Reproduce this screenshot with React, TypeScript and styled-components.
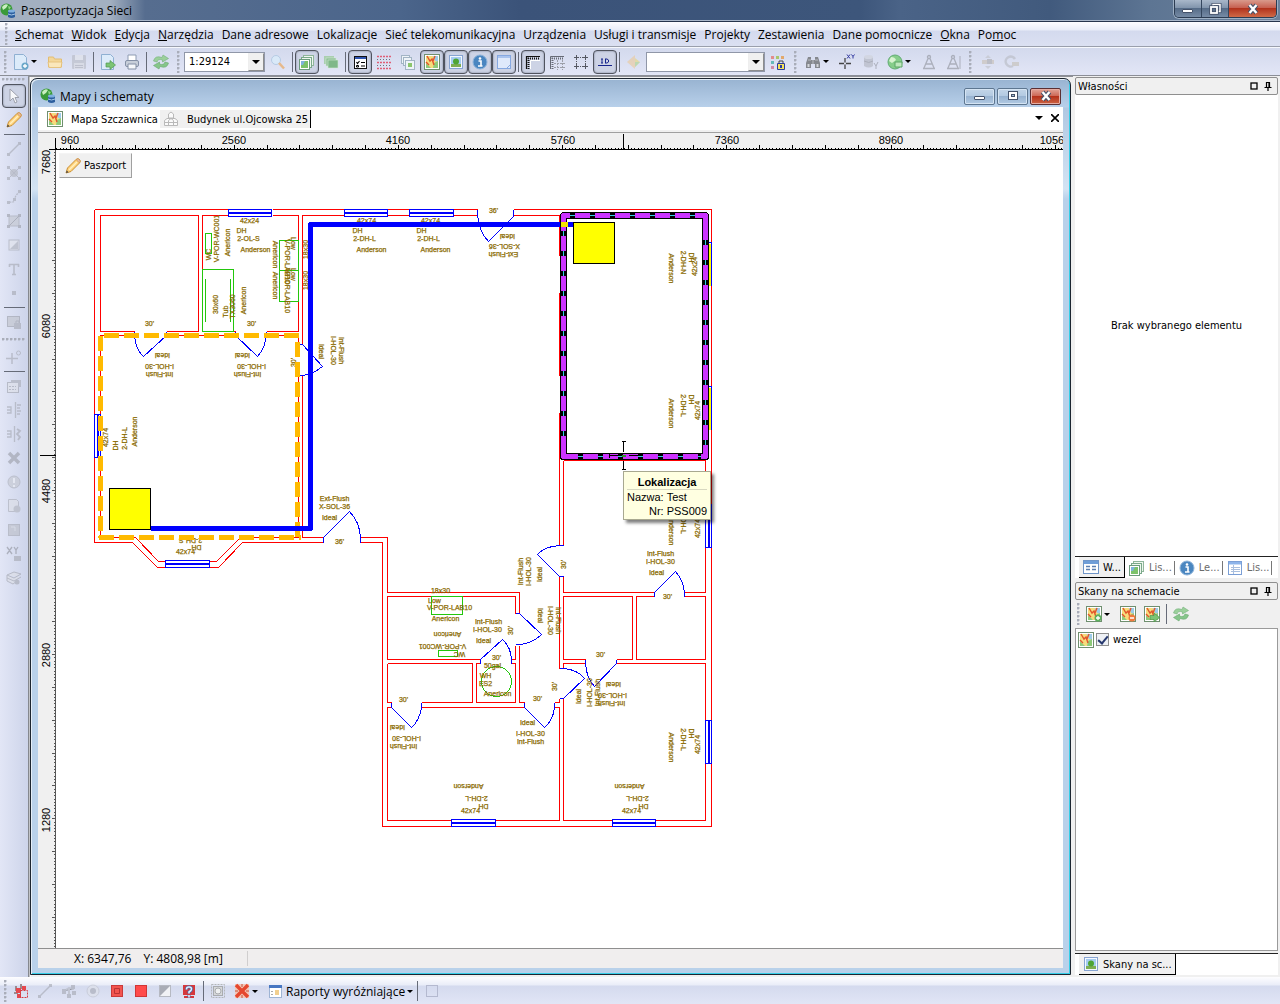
import React from "react";
import styled, { createGlobalStyle, css } from "styled-components";

const UI = `"Open Sans", "Noto Sans", sans-serif`;
const SMALL = `"DejaVu Sans Condensed", "DejaVu Sans", sans-serif`;
const ARIAL = `"Liberation Sans", Arial, sans-serif`;

const Global = createGlobalStyle`
  * { box-sizing: border-box; }
  body { margin: 0; background: #f0f0f0; color: #000; font: 12px ${UI}; }
  button, select, input { font: inherit; color: inherit; margin: 0; padding: 0; }
  button { background: none; border: 0; }
`;

/* ---------- icons ---------- */

const Glyph = styled.svg<{ $dim?: boolean }>`
  display: block;
  flex: none;
  width: 16px;
  height: 16px;
  opacity: ${(p) => (p.$dim ? 0.6 : 1)};
`;

const globe = (
  <>
    <circle cx="6.500" cy="6.500" r="6" fill="#3a9a3a" />
    <path d="M2 4 Q5 0 8 2 L6 5 L3 7Z" fill="#c9efc0" />
    <path d="M8 3 L11 4 L9 7Z" fill="#8fd486" />
    <path d="M8 8v6q3.500 2 7 0V8z" fill="#2d5f9e" />
    <ellipse cx="11.500" cy="8" rx="3.500" ry="1.500" fill="#7fb0df" />
    <path d="M8 11q3.500 2 7 0" fill="none" stroke="#a9cbea" />
  </>
);
const page = (
  <path d="M1.500 0.500h9l3 3v12h-12z" fill="#dcebfa" stroke="#8fb0d2" />
);
const map = (
  <>
    <rect x="0.500" y="0.500" width="15" height="15" fill="#fff" stroke="#6f8f6f" />
    <rect x="2" y="2" width="12" height="12" fill="#f6dc7c" />
    <path d="M9 2h5v6l-3-1z" fill="#9ccbe8" />
    <path d="M2 9l5 5H2zM10 9l4-2v7h-5z" fill="#8fca7a" />
    <path d="M3 2l3 5 2-2 2 6M9 7l2-5M2 8l3 3" fill="none" stroke="#e2552b" strokeWidth="1.400" />
  </>
);
const layers = (
  <>
    <rect x="4.500" y="1.500" width="10" height="10" fill="#eef7ee" stroke="#8fb59a" />
    <rect x="2.500" y="3.500" width="10" height="10" fill="#eef7ee" stroke="#7aa98a" />
    <rect x="0.500" y="5.500" width="10" height="10" fill="#fff" stroke="#6d9b7d" />
    <path d="M2 7h7v7H2z" fill="#7cc26a" />
    <path d="M2 7h4l-2 4H2z" fill="#7fb4dc" />
  </>
);
const picture = (
  <>
    <rect x="1.500" y="1.500" width="13" height="13" fill="#f4f8ff" stroke="#87a4d2" />
    <rect x="3" y="3" width="10" height="10" fill="#a6cdf0" />
    <path d="M3 10h10v3H3z" fill="#7fae52" />
    <circle cx="8" cy="7.500" r="3" fill="#4fa535" />
  </>
);
const info = (
  <>
    <circle cx="8" cy="8" r="7" fill="#4a86c0" stroke="#8fb4da" />
    <circle cx="8" cy="4.500" r="1.300" fill="#fff" />
    <path d="M6.500 7h2.500v5M6 12h4.500" fill="none" stroke="#fff" strokeWidth="1.600" />
  </>
);
const form = (
  <>
    <rect x="0.500" y="1.500" width="15" height="13" fill="#fff" stroke="#6f95c8" />
    <path d="M1 2h14v3H1z" fill="#6f9ed8" />
    <path d="M3 7.500h4M3 10.500h4M9 7.500h4M9 10.500h4" stroke="#5d7fb0" strokeWidth="1.500" />
  </>
);
const sheet = (
  <>
    <rect x="1.500" y="1.500" width="13" height="13" fill="#fff" stroke="#7b9fd6" />
    <path d="M2 2h12v2.500H2z" fill="#8db4ea" />
    <path d="M4 7.500h9M4 9.500h9M4 11.500h9M6.500 5v9" stroke="#a9bfdf" />
  </>
);
const pencil = (
  <>
    <path d="M1 15l1.500-5L11 1.500q2-1.500 3.500 0t0 3.500L6 13.500z" fill="#ffd27a" stroke="#c98f35" />
    <path d="M4 12L12 4" stroke="#fff0c2" strokeWidth="1.500" />
    <path d="M11 1.500q2-1.500 3.500 0t0 3.500z" fill="#e9b9a4" stroke="#c98f35" strokeWidth="0.600" />
    <path d="M1 15l0.800-2.500 1.700 1.700z" fill="#444" />
  </>
);
const refresh = (
  <>
    <path d="M0.500 7Q2 1 9 3.500L10 1l5.500 3.500L9.500 8l0-2Q5 4.500 4 8z" fill="#9bd09b" stroke="#74b07a" strokeWidth="0.600" />
    <path d="M15.500 9Q14 15 7 12.500L6 15 0.500 11.500 6.500 8l0 2Q11 11.500 12 8z" fill="#86c68a" stroke="#6aa870" strokeWidth="0.600" />
  </>
);
const compass = (
  <path d="M8 1.500a1.500 1.500 0 1 1 0 3 1.500 1.500 0 1 1 0-3M7 4.500L3 14M9 4.500L13 14M5 10h6M2 14.500h12" fill="none" stroke="#8d9099" strokeWidth="1.300" />
);

const icons: Record<string, React.ReactNode> = {
  globe, map, layers, picture, info, form, sheet, pencil, refresh, compass,
  newDoc: <>{page}<circle cx="12" cy="12" r="3.500" fill="#6aa7c9" /><path d="M12 10v4M10 12h4" stroke="#fff" strokeWidth="1.300" /></>,
  folder: <><path d="M1.500 3h5l1 2h7v8h-13z" fill="#f3d79a" stroke="#e2bd73" /><path d="M1 8h14l-1 5.500H2z" fill="#fae7bb" stroke="#e2bd73" strokeWidth="0.800" /></>,
  save: <><rect x="1" y="1" width="14" height="14" rx="1" fill="#b7bac4" /><path d="M4 1h8v5H4z" fill="#e3e5ea" /><path d="M3 9h10v6H3z" fill="#d6d8de" /><path d="M4 11.500h8M4 13.500h8" stroke="#a8abb5" /></>,
  export: <>{page}<path d="M6 9h4V6.500L15.500 11 10 15.500V13H6z" fill="#7cc474" stroke="#519a50" strokeWidth="0.700" /></>,
  print: <><path d="M4 1h8v6H4z" fill="#fff" stroke="#8d9bb2" /><rect x="1.500" y="6.500" width="13" height="6" rx="1.500" fill="#c7ced9" stroke="#8490a6" /><path d="M4 10h8v5H4z" fill="#f5f7fa" stroke="#8490a6" /></>,
  lens: <><circle cx="6" cy="6" r="4.500" fill="#d9e9f8" stroke="#b6cbe4" /><path d="M9 9l5 5.500" stroke="#e6b98c" strokeWidth="2.500" /></>,
  stack: <><rect x="1" y="2" width="10" height="8" fill="#a9cfaf" /><rect x="3" y="4" width="10" height="8" fill="#8dbf95" stroke="#d4ead6" strokeWidth="0.600" /><rect x="5" y="6" width="10" height="8" fill="#7fb888" stroke="#d4ead6" strokeWidth="0.600" /></>,
  checklist: <><rect x="2.500" y="2.500" width="12" height="12" fill="#fff" stroke="#111" /><path d="M3 3h11v2H3z" fill="#2f55b0" /><path d="M9 8.500h4M9 12h4M4.500 8l1 1.500L7.500 7" fill="none" stroke="#000" strokeWidth="1.100" /><path d="M4.500 11.500h2v1.500h-2z" fill="none" stroke="#000" /></>,
  dots: <><path d="M1 2.500h14M1 8.500h14M1 14.500h14" stroke="#e05f77" strokeWidth="1.300" strokeDasharray="2 1" /><path d="M1 5.500h14M1 11.500h14" stroke="#70727e" strokeDasharray="1 2" /></>,
  copies: <><rect x="1.500" y="1.500" width="8" height="8" fill="#eef4f8" stroke="#a2b4c4" /><rect x="3.500" y="3.500" width="8" height="8" fill="#eef4f8" stroke="#a2b4c4" /><rect x="5.500" y="6.500" width="9" height="9" fill="#eef4f8" stroke="#a2b4c4" /><path d="M8 9h4v4H8z" fill="#8cc66c" /></>,
  note: <><rect x="1.500" y="1.500" width="13" height="13" fill="#dfe9fb" stroke="#86a8e0" /><path d="M2 3h12" stroke="#a9c3ee" strokeWidth="2" /><path d="M11 14l3-3" stroke="#86a8e0" /></>,
  corner: <><path d="M1.500 15V2.500H15" fill="none" stroke="#111" strokeWidth="1.200" /><path d="M5.500 15V6.500H15" fill="none" stroke="#fff" /><path d="M3.500 15V4.500H15" fill="none" stroke="#111" strokeWidth="2" strokeDasharray="1 1" /></>,
  grid: <><path d="M1.500 15V2.500H15" fill="none" stroke="#666a75" /><path d="M3.500 15V4.500H15" fill="none" stroke="#666a75" strokeWidth="2" strokeDasharray="1 1" /><path d="M8.500 6v10M5 9.500h11M13.500 6v10M5 13.500h11" stroke="#9c9fa8" strokeDasharray="2 1" /></>,
  snaps: <><path d="M3.500 1v5M1 3.500h5M12.500 1v5M10 3.500h5M3.500 10v5M1 12.500h5M12.500 10v5M10 12.500h5" stroke="#555862" /><path d="M7 3.500h3M3.500 7v3M12.500 7v3M7 12.500h3" stroke="#555862" strokeDasharray="1 1" /></>,
  id: <><path d="M4 5h2M5 5v4M4 9h2M8.500 5v4M8 5h2l1.500 1v2L10 9H8" fill="none" stroke="#16248c" strokeWidth="1" /><path d="M1 11.500h14" stroke="#16248c" /></>,
  diamond: <><path d="M1 8l8-7v14z" fill="#ecc998" /><path d="M9 4l5 4-5 5z" fill="#e7d778" /><path d="M9 8l5 0-5 5z" fill="#a8d28a" /></>,
  palette: <><path d="M1 2h3v3H1z" fill="#e28c8c" /><path d="M6 2h3v3H6z" fill="#a9c76b" /><path d="M11 2h3v3h-3z" fill="#e2a86c" /><path d="M1 7h3v3H1z" fill="#65b9b9" /><path d="M1 12h3v3H1z" fill="#cf8ca8" /><path d="M7.500 9.500h7v6h-7z" fill="#f5e25a" stroke="#2b3c9e" /><path d="M10 11h2v3h-2z" fill="#2b3c9e" /><path d="M9 9V7h4v2" fill="none" stroke="#444" /></>,
  binoculars: <><path d="M3 3h3v3h4V3h3l2 6v5h-5v-4H6v4H1V9z" fill="#85888e" /><path d="M2.500 10h2v3h-2zM11.500 10h2v3h-2z" fill="#d4d6da" /><path d="M8 6v4M3 6h3M10 6h3" stroke="#b9bcc2" /></>,
  crossXY: <><path d="M6 4v11M0 9.500h12" stroke="#444" strokeWidth="1.300" /><path d="M5 8.500h2v2H5z" fill="#dde1f2" /><path d="M8 0.500l3 4M11 0.500l-3 4M12.500 0.500l1.500 2 1.500-2M14 2.500v2" fill="none" stroke="#3238a0" /></>,
  database: <><path d="M1 3v9q5 3 9 0V3z" fill="#b0b3bd" /><ellipse cx="5.500" cy="3" rx="4.500" ry="2" fill="#cfd2da" /><path d="M1 7q5 3 9 0M11 9l2 3 2-4M13 12v3" fill="none" stroke="#8c8f98" /></>,
  globe2: <><circle cx="8" cy="8" r="7" fill="#86cd8a" stroke="#62ac74" /><path d="M4 3q4 0 5 3l-4 3-3-2z" fill="#d8f3d0" /><path d="M8 8h7v5H8z" fill="#bfe8bd" stroke="#5aa564" /></>,
  compass2: <>{compass}<path d="M15 2v13" stroke="#8d9099" /></>,
  move: <><path d="M8 1l3 3H5zM8 15l3-3H5z" fill="#c0c2c8" /><rect x="2" y="6" width="12" height="4" fill="#c8bfb4" /><path d="M7 5h5v5H7z" fill="#a9a9ac" /></>,
  rotate: <><path d="M9 12a5 5 0 1 1 2-7" fill="none" stroke="#b7bac2" strokeWidth="2.500" /><path d="M8 8h7v4H8z" fill="#c4bfb5" /></>,
  cursor: <><path d="M4 1v12l3-3 2 5 2-1-2-4.500h4z" fill="#f6f7fa" stroke="#9da1ad" /></>,
  line: <><path d="M3 13L13 3" stroke="#a4a7b1" strokeWidth="1.500" /><path d="M1 12h3v3H1zM12 1h3v3h-3z" fill="#a4a7b1" /></>,
  nodeCircle: <><circle cx="8" cy="8" r="4" fill="#b2b5bd" /><path d="M1 1h3v3H1zM12 1h3v3h-3zM1 12h3v3H1zM12 12h3v3h-3z" fill="#a4a7b1" /><path d="M3 3l10 10M13 3L3 13" stroke="#a4a7b1" /></>,
  curve: <><path d="M3 13q6 1 6-3 0-4 5-7" fill="none" stroke="#a4a7b1" strokeWidth="1.300" strokeDasharray="2 1" /><path d="M1 12h3v3H1zM12 1h3v3h-3zM7 9h3v3H7z" fill="#a4a7b1" /></>,
  polygon: <><path d="M3 3l10 0v10L3 13z" fill="#c3c6ce" stroke="#a4a7b1" /><path d="M1 1h3v3H1zM12 1h3v3h-3zM1 12h3v3H1zM12 12h3v3h-3z" fill="#9a9da7" /><path d="M3 13L13 3" stroke="#8f929c" /></>,
  half: <><rect x="3" y="3" width="10" height="10" fill="#e4e6ec" stroke="#a4a7b1" /><path d="M4 12L12 4v8z" fill="#b0b3bb" /></>,
  text: <path d="M3 3.500h10M8 3v10M6 13.500h4M3.500 3v3M12.500 3v3" fill="none" stroke="#a4a7b1" strokeWidth="1.600" />,
  point: <rect x="6" y="6" width="4" height="4" fill="#a4a7b1" />,
  saveLock: <><rect x="1.500" y="2.500" width="12" height="10" fill="#bfc2ca" stroke="#9a9da7" /><path d="M8 9h7v6H8z" fill="#a4a7b1" /><path d="M10 9V7h3v2" fill="none" stroke="#9a9da7" /></>,
  crossDot: <><path d="M6 4v11M0 9.500h12" stroke="#a4a7b1" strokeWidth="1.500" /><circle cx="12.500" cy="4" r="2" fill="none" stroke="#a4a7b1" /></>,
  props: <><rect x="1.500" y="4.500" width="11" height="10" fill="#dfe1e8" stroke="#a0a3ad" /><path d="M5 2h10v7h-3V5H5z" fill="#a8abb5" /><path d="M3 8.500h7M3 11.500h7" stroke="#a0a3ad" strokeDasharray="2 1" /></>,
  sideA: <><path d="M1 5h4v6H1M1 8h4M9.500 0v16" fill="none" stroke="#a4a7b1" strokeWidth="1.300" /><path d="M11 3h4M11 6h3M11 9h4M11 12h3" stroke="#a4a7b1" strokeWidth="1.500" /></>,
  sideB: <><path d="M1 5h4v6H1M1 8h4M8.500 0v16" fill="none" stroke="#a4a7b1" strokeWidth="1.300" /><path d="M11 3l3 2-3 3 3 3-2 3" fill="none" stroke="#a4a7b1" strokeWidth="1.800" /></>,
  cross: <path d="M3 3l10 10M13 3L3 13" stroke="#9a9da7" strokeWidth="3.500" />,
  ball: <><circle cx="8" cy="8" r="6" fill="#c4c7cf" stroke="#a9acb6" /><path d="M8 4v5M8 11v2" stroke="#eceef3" strokeWidth="2" /></>,
  pageDot: <><path d="M2.500 1.500h8l2 2v10h-10z" fill="#dcdee5" stroke="#a9acb6" /><circle cx="11" cy="11" r="3.500" fill="#b0b3bb" /></>,
  square: <><rect x="2.500" y="2.500" width="11" height="11" fill="#b9bcc5" stroke="#a4a7b1" /><path d="M5 5h4v4" fill="none" stroke="#d7d9e0" /></>,
  xyLock: <><path d="M1 1l5 7M6 1L1 8M8 1l2 3 2-3M10 4v4" fill="none" stroke="#8f929c" strokeWidth="1.300" /><rect x="8" y="10" width="7" height="5" fill="#a4a7b1" /></>,
  book: <><path d="M1 5l7-3 7 2-7 4zM1 5v3l7 3 7-4M1 8v3l6 3 4-3" fill="#dcdee5" stroke="#a0a3ad" /><circle cx="11" cy="12" r="2.500" fill="#a4a7b1" /></>,
  redNodes: <><path d="M3 3v5M8 1v5M1 10h4" stroke="#9a8b90" strokeWidth="2" /><path d="M3 5h5v5H3zM9 3h4v4H9zM4 11h4v4H4z" fill="#e5484e" /><path d="M7.500 7.500h7v7h-7z" fill="none" stroke="#d43b43" strokeDasharray="2 1" /></>,
  greyNodes: <><path d="M3 8l5-3 5 1M8 5v8" stroke="#b3b6bf" strokeWidth="2" /><path d="M1 6h4v5H1zM10 2h4v4h-4zM6 11h4v4H6zM11 8h4v4h-4z" fill="#a4a7b1" /></>,
  radio: <><circle cx="8" cy="8" r="6" fill="#dfe2ea" stroke="#bfc2cc" /><circle cx="8" cy="8" r="3" fill="#a4a7b1" /></>,
  redSquare: <><rect x="2.500" y="2.500" width="11" height="11" fill="#f2544f" stroke="#c93a3a" /><path d="M5.500 5.500h5v5h-5z" fill="none" stroke="#b93434" /></>,
  redSolid: <rect x="2.500" y="2.500" width="11" height="11" fill="#ff4b4b" stroke="#cf3636" />,
  halfTri: <><rect x="2.500" y="2.500" width="11" height="11" fill="#f1f2f6" stroke="#b6b9c2" /><path d="M3 13V3h10z" fill="#a9acb6" /></>,
  help: <><path d="M2 2h12v10H2zM3 13h10v2H3z" fill="#d5383c" /><path d="M5.500 6.500q0-3 3-2.500t1.500 3.500l-2 1.500v1.500M8 12v2.500" fill="none" stroke="#3f6fb5" strokeWidth="3" /><path d="M5.500 6.500q0-3 3-2.500t1.500 3.500l-2 1.500v1.500M8 12v2.500" fill="none" stroke="#e6effc" strokeWidth="1.600" /></>,
  ring: <><rect x="1.500" y="1.500" width="13" height="13" fill="none" stroke="#b3b6b8" strokeDasharray="2 1" /><rect x="3.500" y="3.500" width="9" height="9" fill="#d6d8da" stroke="#a9acaf" /><circle cx="8" cy="8" r="3" fill="#eef0f0" stroke="#a9acaf" /></>,
  redX: <><path d="M1 1h14v14H1z" fill="#f3c7b7" /><path d="M2 2l12 12M14 2L2 14" stroke="#e5482f" strokeWidth="3.500" /><path d="M8 1v3M8 12v3M1 8h3M12 8h3" stroke="#c4533d" /></>,
  report: <><rect x="1.500" y="2.500" width="12" height="12" fill="#fff" stroke="#9eb4d4" /><path d="M1 2h13v3H1z" fill="#4777c2" /><path d="M7 7h4v5H7z" fill="#f1cf8f" /><path d="M3 8.500h2M3 11.500h2" stroke="#aaa" /></>,
  blank: <rect x="2.500" y="2.500" width="11" height="11" fill="none" stroke="#b4b9cf" />,
  houses: <><path d="M5.500 7V3L8 1l2.500 2v4zM1.500 14.500v-5L4 7.500h8l2.500 2v5zM5.500 14.500v-5M10.500 14.500v-5M5.500 9.500L8 7.500l2.500 2M1.500 11.500h13" fill="#fafafa" stroke="#b9b9b9" /></>,
  mapAdd: <>{map}<circle cx="12" cy="12" r="3.500" fill="#5db05d" /><path d="M12 10v4M10 12h4" stroke="#fff" strokeWidth="1.300" /></>,
  mapDel: <>{map}<circle cx="12" cy="12" r="3.500" fill="#ef7a3d" /><path d="M10 12h4" stroke="#fff" strokeWidth="1.500" /></>,
  mapGo: <>{map}<path d="M6 9.500h4V7l5.500 4.500L10 16v-2.500H6z" fill="#7cc474" stroke="#4f964c" strokeWidth="0.700" /></>,
};

const Icon = ({ name, dim }: { name: string; dim?: boolean }) => (
  <Glyph viewBox="0 0 16 16" $dim={dim} aria-hidden="true">{icons[name]}</Glyph>
);

/* ---------- shared parts ---------- */

const Shell = styled.div`
  display: flex;
  flex-direction: column;
  min-height: 100vh;
`;

const Caret = styled.span`
  flex: none;
  width: 0;
  height: 0;
  border: 3px solid transparent;
  border-top-color: #000;
  border-bottom: 0;
`;

const ToolButton = styled.button<{ $on?: boolean; $split?: boolean }>`
  display: flex;
  flex: none;
  align-items: center;
  gap: 2px;
  width: ${(p) => (p.$split ? 34 : 24)}px;
  height: 24px;
  padding: 0 4px;
  ${(p) =>
    p.$on &&
    css`
      padding: 0 3px;
      border: 1px solid #50545f;
      border-radius: 4px;
      background: #cdd3e5;
      box-shadow: inset 0 0 2px #6d7385;
    `}
`;

const Sep = styled.span<{ $flat?: boolean }>`
  flex: none;
  ${(p) =>
    p.$flat
      ? "width: 21px; height: 1px; margin: 2px 0;"
      : "width: 1px; height: 20px; margin: 0 2px;"}
  background: #666b78;
`;

const Grip = styled.span<{ $flat?: boolean; $size?: number }>`
  flex: none;
  ${(p) =>
    p.$flat
      ? `width: 24px; height: ${p.$size ?? 11}px; background: radial-gradient(circle at 1px 1px, #a9adb9 1px, transparent 2px) 0 50% / 4px 4px repeat-x;`
      : `height: 22px; width: ${p.$size ?? 11}px; background: radial-gradient(circle at 1px 1px, #a9adb9 1px, transparent 2px) 60% 0 / 4px 4px repeat-y;`}
`;

type Tool = string | { i: string; n: string; on?: boolean; split?: boolean; dim?: boolean };

const Tools = ({ items, flat }: { items: Tool[]; flat?: boolean }) => (
  <>
    {items.map((t, k) =>
      t === "|" ? <Sep key={k} $flat={flat} /> :
      t === ":" ? <Grip key={k} $flat={flat} /> :
      typeof t === "string" ? null : (
        <ToolButton key={k} type="button" aria-label={t.n} $on={t.on} $split={t.split}>
          <Icon name={t.i} dim={t.dim} />
          {t.split && <Caret />}
        </ToolButton>
      )
    )}
  </>
);

/* ---------- top bars ---------- */

const TitleBar = styled.header`
  display: flex;
  align-items: flex-start;
  height: 22px;
  border-bottom: 1px solid #26354c;
  box-shadow: inset 0 -1px #a9b7c9;
  background: linear-gradient(90deg, #a3b0c1 0, #a3b0c1 110px, #566d8f 145px, #4b658b 400px, #3b5379 520px, #3d567b 860px, #4a6387 900px, #415a7d 1050px, #5d7593 1150px, #6c829c);
`;

const AppTitle = styled.h1`
  display: flex;
  align-items: center;
  gap: 5px;
  flex: 1;
  height: 21px;
  margin: 0;
  font: 12px ${UI};
`;

const WinButtons = styled.div`
  display: flex;
  margin-right: 3px;
  border: 1px solid #2c3c52;
  border-top: 0;
  border-radius: 0 0 5px 5px;
  overflow: hidden;
  box-shadow: 0 0 0 1px #9eb0c4;
`;

const WinButton = styled.button<{ $close?: boolean }>`
  display: grid;
  place-items: center;
  width: ${(p) => (p.$close ? 47 : 27)}px;
  height: 17px;
  border-right: ${(p) => (p.$close ? "0" : "1px solid #34465e")};
  background: ${(p) =>
    p.$close
      ? "linear-gradient(#d99a8c, #c76151 45%, #b2331d 50%, #cf6a47)"
      : "linear-gradient(#a9b8ca, #8295ad 45%, #566c88 50%, #768ba5)"};
`;

const WinGlyph = ({ kind }: { kind: "min" | "max" | "restore" | "close" }) => (
  <svg width="14" height="12" viewBox="0 0 14 12" aria-hidden="true">
    {kind === "min" && <rect x="1.500" y="6.500" width="10" height="3" rx="0.500" fill="#fff" stroke="#44526a" />}
    {kind === "max" && (
      <>
        <rect x="2.500" y="1.500" width="9" height="8" fill="#fff" stroke="#44526a" />
        <rect x="5.500" y="4.500" width="3" height="2" fill="#a9bfd6" stroke="#44526a" />
      </>
    )}
    {kind === "restore" && (
      <g fill="none">
        <path d="M5 3V1.500h7V8.500h-2" stroke="#44526a" strokeWidth="3" />
        <path d="M5 3V1.500h7V8.500h-2" stroke="#fff" strokeWidth="1.500" />
        <rect x="3" y="4" width="6" height="6" stroke="#44526a" strokeWidth="3.500" />
        <rect x="3" y="4" width="6" height="6" stroke="#fff" strokeWidth="1.800" />
      </g>
    )}
    {kind === "close" && (
      <g fill="none">
        <path d="M3.500 2l7 8M10.500 2l-7 8" stroke="#44526a" strokeWidth="4.500" />
        <path d="M3.500 2l7 8M10.500 2l-7 8" stroke="#fff" strokeWidth="2.400" />
      </g>
    )}
  </svg>
);

const MenuBar = styled.nav`
  display: flex;
  align-items: center;
  height: 25px;
  padding-left: 3px;
  border-bottom: 1px solid #9a9fac;
  background: linear-gradient(#fdfdff 0, #e9edf8 8px, #d4daee 9px, #dbe0f2);
`;

const MenuItem = styled.button`
  padding: 0 4px;
  white-space: nowrap;
`;

const ToolBar = styled.div`
  display: flex;
  align-items: center;
  height: 29px;
  padding-left: 3px;
  border-top: 1px solid #f6f8fd;
  border-bottom: 1px solid #8b8e97;
  background: linear-gradient(#d3d9ed, #e2e6f6);
`;

const Combo = styled.label<{ $w: number }>`
  display: grid;
  flex: none;
  width: ${(p) => p.$w}px;
  padding-right: 1px;
`;

const ComboBox = styled.select`
  grid-area: 1 / 1;
  appearance: none;
  width: 100%;
  height: 20px;
  padding: 0 20px 0 4px;
  border: 1px solid #9097a8;
  border-radius: 0;
  background: #fff;
  font: 11px ${SMALL};
`;

const ComboArrow = styled.span`
  grid-area: 1 / 1;
  display: grid;
  place-items: center;
  justify-self: end;
  align-self: center;
  width: 16px;
  height: 18px;
  margin-right: 1px;
  border: 1px solid #8d8d8d;
  border-top-color: #eee;
  border-left-color: #eee;
  background: #f0f0f0;
  pointer-events: none;
  span { border-width: 4px 4px 0; }
`;

/* ---------- body ---------- */

const Body = styled.div`
  display: flex;
  flex: 1;
`;

const SideBar = styled.div`
  display: flex;
  flex: none;
  flex-direction: column;
  align-items: center;
  width: 28px;
  background: linear-gradient(90deg, #e2e6f6, #cdd4ea);
`;

const Mdi = styled.main`
  display: flex;
  flex: 1;
  min-width: 0;
  padding: 2px;
  background: linear-gradient(#8e9096, #8e9096) 0 0 / 100% 1px no-repeat, linear-gradient(90deg, #85888f 1px, #fff 2px, #f0f0f0 3px);
`;

const MapWindow = styled.section`
  display: flex;
  flex: 1;
  flex-direction: column;
  min-width: 0;
  padding: 0 7px 6px;
  border: 1px solid #1c2530;
  border-radius: 7px 7px 0 0;
  background: linear-gradient(#98b3d1 0, #b8d0ea 28px, #b0c8e2 29px, #d3e3f3 110px, #b9d1ea 120px);
  box-shadow: inset 1px 1px #e4eef8, inset -1px -1px #35cfe8;
`;

const WindowTitle = styled.div`
  display: flex;
  align-items: center;
  gap: 4px;
  height: 28px;
  padding: 6px 2px 0;
`;

const WindowName = styled.h2`
  flex: 1;
  margin: 0;
  font: 12px ${UI};
`;

const FrameButton = styled.button<{ $close?: boolean }>`
  display: grid;
  place-items: center;
  width: 31px;
  height: 17px;
  margin-right: ${(p) => (p.$close ? 0 : -2)}px;
  border: 1px solid ${(p) => (p.$close ? "#5b2f33" : "#5d7690")};
  border-radius: 2px;
  box-shadow: inset 0 0 0 1px ${(p) => (p.$close ? "#e6aca2" : "#d5e4f3")};
  background: ${(p) =>
    p.$close
      ? "linear-gradient(#e2a497, #cd6a58 45%, #b5321b 50%, #cc6444)"
      : "linear-gradient(#c3d5e8, #b3cae2 45%, #98b3d1 50%, #b2cae3)"};
`;

const TabRow = styled.div`
  display: flex;
  align-items: stretch;
  height: 25px;
  padding-bottom: 2px;
  border-bottom: 2px solid #f0f0f0;
  background: #fff;
  font: 11px ${SMALL};
`;

const DocTab = styled.button<{ $on?: boolean }>`
  display: flex;
  align-items: center;
  gap: 8px;
  margin-top: 3px;
  padding: 0 2px 0 ${(p) => (p.$on ? 3 : 9)}px;
  background: ${(p) => (p.$on ? "#f0f0f0" : "#fff")};
  border-right: ${(p) => (p.$on ? "1px solid #000" : "0")};
  white-space: nowrap;
`;

const Spacer = styled.span`
  flex: 1;
`;

const BareButton = styled.button`
  display: grid;
  place-items: center;
  width: 16px;
  span { border-width: 4px 4px 0; }
`;

const Workspace = styled.div`
  display: grid;
  flex: 1;
  grid-template: 17px 1fr / 18px 1fr;
  border-top: 1px solid #a0a0a0;
  background: #f0f0f0;
`;

const RulerSvg = styled.svg<{ $side?: boolean }>`
  display: block;
  width: 100%;
  height: 100%;
  min-height: 0;
  overflow: hidden;
  grid-area: ${(p) => (p.$side ? "1 / 1 / 3 / 2" : "1 / 1 / 2 / 3")};
  contain: size;
  text { font: 11px ${ARIAL}; text-anchor: middle; }
`;

const Canvas = styled.div`
  position: relative;
  grid-area: 2 / 2;
  background: #fff;
  overflow: hidden;
`;

const Plan = styled.svg`
  display: block;
  width: 100%;
  height: 100%;
  contain: size;
  text {
    font: 7px ${ARIAL};
    fill: #8a6a00;
    stroke: #8a6a00;
    stroke-width: 0.25px;
    text-anchor: middle;
    dominant-baseline: central;
  }
`;

const PassportButton = styled.button`
  position: absolute;
  left: 3px;
  top: 3px;
  display: flex;
  align-items: center;
  gap: 3px;
  height: 25px;
  padding: 0 5px;
  border: 1px solid #f4f4f4;
  border-right-color: #a0a0a0;
  border-bottom-color: #a0a0a0;
  background: #f0f0f0;
  font: 11px ${SMALL};
`;

const Tip = styled.dl`
  position: absolute;
  left: 567px;
  top: 321px;
  display: grid;
  grid-template-columns: auto auto;
  column-gap: 3px;
  margin: 0;
  padding: 3px 3px 1px;
  border: 1px solid #a8a890;
  background: #ffffe1;
  box-shadow: 3px 3px 3px #00000080;
  font: 11px/14px ${ARIAL};
  white-space: nowrap;
  dt { text-align: right; }
  dd { margin: 0; }
`;

const TipTitle = styled.div`
  grid-column: 1 / -1;
  border-bottom: 1px solid #d8d8c0;
  font-weight: bold;
  text-align: center;
`;

const StatusBar = styled.footer`
  display: flex;
  align-items: center;
  gap: 12px;
  height: 20px;
  padding-left: 36px;
  border-top: 1px solid #8f8f8f;
  background: #f0eeee;
  i { width: 1px; height: 15px; margin-left: 12px; background: #d0cece; }
`;

/* ---------- right panels ---------- */

const Dock = styled.aside`
  display: flex;
  flex: none;
  flex-direction: column;
  width: 207px;
  padding: 1px 2px 2px;
  background: #f0f0f0;
  font: 11px ${SMALL};
`;

const PanelHead = styled.div`
  display: flex;
  align-items: center;
  height: 18px;
  padding: 0 2px;
  border: 1px solid #8f8f8f;
  border-radius: 2px;
  background: #f0f0f0;
  h3 { flex: 1; margin: 0; font: inherit; }
`;

const HeadButton = styled.button`
  display: grid;
  place-items: center;
  width: 14px;
  height: 14px;
`;

const Empty = styled.div`
  display: grid;
  flex: 460 0 auto;
  place-items: center;
  height: 461px;
  background: #fff;
`;

const DockTabs = styled.div<{ $last?: boolean }>`
  display: flex;
  height: 22px;
  margin-bottom: ${(p) => (p.$last ? 0 : 4)}px;
  padding-left: 4px;
  border-top: 1px solid #222;
  background: #fff;
`;

const DockTab = styled.button<{ $on?: boolean }>`
  display: flex;
  align-items: center;
  gap: 4px;
  padding: 0 3px 0 4px;
  white-space: nowrap;
  ${(p) =>
    p.$on
      ? "background: #f0f0f0; border-right: 1px solid #000; border-bottom: 1px solid #000;"
      : "color: #6b6b6b; background: linear-gradient(#777, #777) 100% 50% / 1px 14px no-repeat;"}
`;

const DockTools = styled.div`
  display: flex;
  align-items: center;
  height: 28px;
  padding-left: 1px;
`;

const ScanList = styled.ul`
  flex: 320 0 auto;
  min-height: 323px;
  margin: 0 0 2px;
  padding: 2px;
  border: 1px solid #9a9a9a;
  background: #fff;
  list-style: none;
  li { display: flex; align-items: center; gap: 2px; height: 17px; }
  label { display: flex; align-items: center; gap: 4px; }
`;

const Check = styled.input`
  appearance: none;
  display: grid;
  place-items: center;
  width: 13px;
  height: 13px;
  border: 1px solid #8e8f8f;
  background: #eef1f5;
  &:checked::after {
    content: "";
    width: 4px;
    height: 8px;
    margin-top: -2px;
    border: solid #26386e;
    border-width: 0 2px 2px 0;
    transform: rotate(40deg);
  }
`;

const BottomBar = styled.div`
  display: flex;
  align-items: center;
  height: 28px;
  padding-left: 3px;
  background: linear-gradient(#fdfdff 0, #e9edf8 8px, #d4daee 9px, #e2e6f6);
`;

const ReportButton = styled.button`
  display: flex;
  align-items: center;
  gap: 2px;
  height: 24px;
  padding: 0 2px 0 4px;
  white-space: nowrap;
`;

/* ---------- rulers ---------- */

const steps = (n: number) => Array.from({ length: n }, (_, i) => i);
const UNIT = 3.284;

const TopRuler = () => (
  <RulerSvg shapeRendering="crispEdges">
    <path
      d={"M18 16.500H4000" + steps(800).map((k) => {
        const x = Math.floor(32 + (k - 4) * UNIT) + 0.5;
        return `M${x} ${(k - 4) % 10 ? 15 : 12}V17`;
      }).join("")}
      stroke="#000"
      fill="none"
    />
    <path d="M17.500 5V17M585.500 1V16" stroke="#000" />
    {steps(7).map((k) => (
      <text key={k} x={32 + Math.round(k * 164.2)} y="11">{960 + k * 1600}</text>
    ))}
  </RulerSvg>
);

const SideRuler = () => (
  <RulerSvg $side shapeRendering="crispEdges">
    <path
      d={"M17.500 17V4000" + steps(600).map((k) => {
        const y = Math.floor(29 + (k - 3) * UNIT) + 0.5;
        return `M${(k - 3) % 10 ? 16 : 14} ${y}H18`;
      }).join("")}
      stroke="#555"
      fill="none"
    />
    <path d="M11 16.500H18M2 322.500H18" stroke="#000" />
    {steps(5).map((k) => {
      const y = 29 + Math.round(k * 164.4);
      return <text key={k} x="12" y={y} transform={`rotate(-90 12 ${y})`}>{7680 - k * 1600}</text>;
    })}
  </RulerSvg>
);

/* ---------- floor plan ---------- */

const walls = `
M94 209H228M272 209H344M387 209H409M453 209H477M513 209H711V242M711 285V386M711 429V504M711 547V720M711 763V826H655M612 826H495M451 826H382V542H360M323 542H242L218 567H209M165 567H157L132 542H94V457M94 414V209
M100 331V215H198V331H166M134 331H100M202 331V215H228M272 215H298V331H266M235 331H202
M302 344V215H344M387 215H409M453 215H477M513 215H559V255M559 292V375M559 412V545
M298 344V335H266M235 335H166M134 335H100V537H135L158 561H165M209 561H216L240 537H298V375M302 375V537H323M360 537H387V592H519V613M515 613V596H387V659H480M511 659H515V645
M519 645V702H524M480 663H476V702H515V663H511M387 663H472V702H421M391 702H387V663M391 707H387V820H451M495 820H559V707H554M554 702H559V698M421 707H524
M563 460H705V504M705 547V592H684M654 592H563V576M559 576V668M563 545V460M563 668V663H585M563 659V596H632V659H616M585 659H563M636 659V596H654M684 596H705V659H636M616 663H705V720M705 763V820H655M612 820H563V698`;

const blues = `
M134 331V335Q135 349 143 356L166 335V331M235 331V335L257 356Q266 346 266 331
M298 344H302L322 366Q312 374 302 375H298M477 209V215Q479 232 488 241L513 216V209
M323 542V537L349 511Q359 521 360 537V542M563 545H559Q544 546 537 554L559 576H563
M654 596V592L675 571Q683 580 684 592V596M515 613H519L541 634Q532 643 519 644H515
M480 663V659L502 639Q510 646 511 659V663M391 702V707L411 727Q419 720 421 707V702
M524 702V707L544 727Q553 719 554 707V702M559 668H563Q577 669 584 678L563 698H559
M585 659V663Q586 678 594 686L616 663V659`;

const hWindows = [[228, 209, 43], [344, 209, 43], [409, 209, 44], [165, 560, 44], [451, 819, 44], [612, 819, 43]];
const vWindows = [[94, 414, 43], [705, 504, 43], [705, 720, 43]];

type Label = [string, number, number, number?];
const labels: Label[] = [
  ["42x24", 249, 220], ["DH", 241, 230], ["2-OL-S", 248, 238], ["Anderson", 255, 249],
  ["V-POR-WC001", 216, 238, -90], ["WC", 208, 254, -90], ["Anericon", 227, 242, -90],
  ["30x60", 215, 304, -90], ["Tub", 225, 311, -90], ["TX3060", 232, 306, -90], ["Anericon", 243, 300, -90],
  ["Low", 293, 243, 90], ["V-POR-LAB10", 287, 261, 90], ["Anericon", 275, 254, 90], ["18x30", 305, 249, -90],
  ["Low", 293, 274, 90], ["V-POR-LAB10", 287, 290, 90], ["Anericon", 275, 285, 90], ["18x30", 305, 280, -90],
  ["30'", 149, 323], ["30'", 251, 323],
  ["Ideal", 162, 355, 180], ["I-HOL-30", 159, 366, 180], ["Int-Flush", 159, 374, 180],
  ["Ideal", 242, 355, 180], ["I-HOL-30", 251, 366, 180], ["Int-Flush", 247, 374, 180],
  ["Ideal", 321, 351, 90], ["I-HOL-30", 333, 350, 90], ["Int-Flush", 341, 350, 90], ["30'", 293, 362, -90],
  ["42x74", 105, 437, -90], ["DH", 115, 445, -90], ["2-DH-L", 124, 438, -90], ["Anderson", 134, 431, -90],
  ["42x74", 366, 220], ["DH", 357, 230], ["2-DH-L", 364, 238], ["Anderson", 371, 249],
  ["42x74", 430, 220], ["DH", 421, 230], ["2-DH-L", 428, 238], ["Anderson", 435, 249],
  ["36'", 493, 210], ["Ideal", 507, 236, 180], ["X-SOL-36", 504, 246, 180], ["Ext-Flush", 503, 254, 180],
  ["Anderson", 671, 268, 90], ["2-DH-N", 683, 262, 90], ["DH", 691, 257, 90], ["42x24", 694, 266, -90],
  ["Anderson", 671, 413, 90], ["2-DH-L", 683, 405, 90], ["DH", 691, 399, 90], ["42x74", 697, 410, -90],
  ["Anderson", 671, 530, 90], ["2-DH-L", 683, 522, 90], ["DH", 691, 515, 90], ["42x74", 697, 528, -90],
  ["Anderson", 671, 747, 90], ["2-DH-L", 683, 739, 90], ["DH", 691, 733, 90], ["42x74", 697, 744, -90],
  ["Anderson", 468, 786, 180], ["2-DH-L", 476, 798, 180], ["DH", 483, 806, 180], ["42x74", 470, 810],
  ["Anderson", 629, 786, 180], ["2-DH-L", 637, 798, 180], ["DH", 643, 806, 180], ["42x74", 631, 810],
  ["2-DH-S", 190, 540, 180], ["DH", 196, 547, 180], ["42x74", 185, 551],
  ["Ext-Flush", 334, 498], ["X-SOL-36", 334, 506], ["Ideal", 329, 517], ["36'", 339, 541],
  ["Int-Flush", 520, 571, -90], ["I-HOL-30", 528, 571, -90], ["Ideal", 539, 574, -90], ["30'", 563, 564, -90],
  ["Int-Flush", 660, 553], ["I-HOL-30", 660, 561], ["Ideal", 656, 572], ["30'", 667, 596],
  ["18x30", 440, 590], ["Low", 434, 600], ["V-POR-LAB10", 449, 607], ["Anericon", 445, 618],
  ["Anericon", 447, 634, 180], ["V-POR-WC001", 442, 646, 180], ["WC", 459, 654, 180],
  ["Int-Flush", 488, 621], ["I-HOL-30", 487, 629], ["Ideal", 483, 640], ["30'", 510, 630, -90],
  ["Ideal", 540, 615, 90], ["I-HOL-30", 550, 620, 90], ["Int-Flush", 558, 620, 90],
  ["30'", 496, 657], ["50gal", 492, 665], ["WH", 485, 675], ["ES2", 485, 683], ["Anericon", 497, 693],
  ["30'", 403, 699], ["Ideal", 397, 727, 180], ["I-HOL-30", 406, 738, 180], ["Int-Flush", 403, 746, 180],
  ["30'", 537, 698], ["Ideal", 527, 722], ["I-HOL-30", 530, 733], ["Int-Flush", 530, 741],
  ["30'", 554, 686, -90], ["30'", 600, 654], ["Ideal", 578, 696, -90], ["I-HOL-30", 589, 692, -90], ["Int-Flush", 597, 692, -90],
  ["Ideal", 613, 684, 180], ["I-HOL-30", 612, 695, 180], ["Int-Flush", 611, 703, 180],
];

const FloorPlan = () => (
  <Plan role="img" aria-label="Plan budynku">
    <g transform="translate(-55.5 -149.5)" fill="none" shapeRendering="crispEdges">
      <path d={walls} stroke="#f00" />
      <path d={blues} stroke="#00f" />
      {hWindows.map(([x, y, w]) => (
        <g key={`${x}-${y}`} stroke="#00f">
          <rect x={x} y={y} width={w} height="7" fill="#fff" />
          <path d={`M${x} ${y + 3.5}h${w}`} strokeWidth="2" />
        </g>
      ))}
      {vWindows.map(([x, y, h]) => (
        <g key={`${x}-${y}`} stroke="#00f">
          <rect x={x} y={y} width="6" height={h} fill="#fff" />
          <path d={`M${x + 3.5} ${y}v${h}`} strokeWidth="2" />
        </g>
      ))}
      <g stroke="#23c60c">
        <path d="M205 233h6v20h-6zM202 269h31v62h-31zM205 278v43M230 278v43M279 240h19v61h-19zM279 270h19M431 596h31v18h-31zM438 650h19v6h-19z" />
        <circle cx="496" cy="681" r="15" />
      </g>
      {labels.map(([t, x, y, r], k) => (
        <text key={k} x={x} y={y} transform={r ? `rotate(${r} ${x} ${y})` : undefined}>{t}</text>
      ))}
      <g stroke="#ffba00" strokeWidth="5" strokeDasharray="15 5">
        <path d="M103 335H300" />
        <path d="M100 335V537" />
        <path d="M297 341V537" />
        <path d="M98 537H300" />
      </g>
      <path d="M573 224H310V528H150" stroke="#00f" strokeWidth="5" strokeLinejoin="round" />
      <g fill="#ff0" stroke="#000">
        <rect x="573" y="222" width="41" height="41" />
        <rect x="109" y="488" width="41" height="41" />
      </g>
      <rect x="563" y="215" width="142" height="241" stroke="#000" strokeWidth="7" strokeLinejoin="round" />
      <rect x="563" y="215" width="142" height="241" stroke="#cc33ff" strokeWidth="5" strokeLinejoin="round" />
      <path
        d="M569 215H700M563 230V450M705 239V450M577 456H700"
        stroke="#000"
        strokeWidth="5"
        strokeDasharray="5 15"
      />
      <path
        d="M569 215H700M563 230V450M705 239V450M577 456H700"
        stroke="#2fd0e6"
        strokeDasharray="5 15"
      />
      <path d="M708 242H711V285H708M708 386H711V429H708" stroke="#00f" />
      <path d="M709 243V285M709 387V429" stroke="#ff0" strokeWidth="2" />
      <path d="M560 224h7" stroke="#f5e400" strokeWidth="5" />
      <path d="M623 441V451M623 460V469M609 455H619M628 455H637M621 441h4M621 469h4M609 453v4" stroke="#000" />
      <path d="M621 455h4" stroke="#2c9a2c" strokeWidth="2" />
    </g>
  </Plan>
);

/* ---------- content ---------- */

const menus = ["_Schemat", "_Widok", "_Edycja", "_Narzędzia", "Dane adresowe", "Lokalizacje", "Sieć telekomunikacyjna", "Urządzenia", "Usługi i transmisje", "Projekty", "Zestawienia", "Dane pomocnicze", "_Okna", "Po_moc"];

const mainA: Tool[] = [
  { i: "newDoc", n: "Nowy", split: true }, { i: "folder", n: "Otwórz" }, { i: "save", n: "Zapisz", dim: true }, "|",
  { i: "export", n: "Eksport" }, { i: "print", n: "Drukuj" }, "|", { i: "refresh", n: "Odśwież" }, ":",
];
const mainB: Tool[] = [
  { i: "lens", n: "Powiększ" }, "|", { i: "layers", n: "Warstwy", on: true }, { i: "stack", n: "Stos" }, "|",
  { i: "checklist", n: "Legenda", on: true }, { i: "dots", n: "Punkty" }, { i: "copies", n: "Kopie" },
  { i: "map", n: "Mapa", on: true }, { i: "picture", n: "Obraz", on: true }, { i: "info", n: "Informacje", on: true }, { i: "note", n: "Notatka", on: true }, "|",
  { i: "corner", n: "Linijka", on: true }, { i: "grid", n: "Siatka" }, { i: "snaps", n: "Przyciąganie" }, { i: "id", n: "Identyfikatory", on: true }, "|",
  { i: "diamond", n: "Styl", dim: true },
];
const mainC: Tool[] = [
  { i: "palette", n: "Paleta" }, ":", { i: "binoculars", n: "Szukaj", split: true }, { i: "crossXY", n: "Współrzędne" },
  { i: "database", n: "Baza", dim: true }, { i: "globe2", n: "Świat", split: true }, { i: "compass", n: "Cyrkiel", dim: true }, { i: "compass2", n: "Cyrkiel 2", dim: true }, ":",
  { i: "move", n: "Przesuń", dim: true }, { i: "rotate", n: "Obróć", dim: true },
];
const side: Tool[] = [
  { i: "cursor", n: "Wskaźnik", on: true }, { i: "pencil", n: "Ołówek" }, "|",
  ...[["line", "Linia"], ["nodeCircle", "Węzeł"], ["curve", "Krzywa"], ["polygon", "Wielokąt"], ["half", "Wypełnienie"], ["text", "Tekst"], ["point", "Punkt"]].map(([i, n]) => ({ i, n, dim: true })), "|",
  { i: "saveLock", n: "Zapisz widok", dim: true }, ":", { i: "crossDot", n: "Celownik", dim: true }, "|",
  ...[["props", "Właściwości"], ["sideA", "Wyrównaj"], ["sideB", "Odepnij"], ["cross", "Usuń"], ["ball", "Opis"], ["pageDot", "Dokument"], ["square", "Pole"], ["xyLock", "Blokada XY"], ["book", "Książka"]].map(([i, n]) => ({ i, n, dim: true })),
];
const bottomA: Tool[] = [
  { i: "redNodes", n: "Zaznacz węzły" }, { i: "line", n: "Zaznacz linię", dim: true }, { i: "greyNodes", n: "Zaznacz sieć", dim: true }, { i: "radio", n: "Zaznacz punkt", dim: true },
  { i: "redSquare", n: "Obszar" }, { i: "redSolid", n: "Obszar pełny" }, { i: "halfTri", n: "Odwróć" }, { i: "help", n: "Pomoc" }, "|",
  { i: "ring", n: "Bufor" }, { i: "redX", n: "Wyczyść", split: true },
];

const Menu = ({ text }: { text: string }) => {
  const at = text.indexOf("_");
  return (
    <MenuItem type="button">
      {at < 0 ? text : <>{text.slice(0, at)}<u>{text[at + 1]}</u>{text.slice(at + 2)}</>}
    </MenuItem>
  );
};

const Head = ({ title }: { title: string }) => (
  <PanelHead>
    <h3>{title}</h3>
    <HeadButton type="button" aria-label="Maksymalizuj">
      <svg width="8" height="8"><rect x="1" y="1" width="6" height="6" fill="none" stroke="#000" strokeWidth="1.300" /></svg>
    </HeadButton>
    <HeadButton type="button" aria-label="Przypnij">
      <svg width="8" height="10"><path d="M2.500 6V1.500h3V6M5 1.500V6M0.500 6.500h7M4 6.500V10" fill="none" stroke="#000" strokeWidth="1.200" /></svg>
    </HeadButton>
  </PanelHead>
);

export default function App() {
  return (
    <Shell>
      <Global />
      <TitleBar>
        <AppTitle><Icon name="globe" />Paszportyzacja Sieci</AppTitle>
        <WinButtons>
          <WinButton type="button" aria-label="Minimalizuj"><WinGlyph kind="min" /></WinButton>
          <WinButton type="button" aria-label="Przywróć"><WinGlyph kind="restore" /></WinButton>
          <WinButton type="button" aria-label="Zamknij" $close><WinGlyph kind="close" /></WinButton>
        </WinButtons>
      </TitleBar>
      <MenuBar>
        <Grip $size={8} />
        {menus.map((m) => <Menu key={m} text={m} />)}
      </MenuBar>
      <ToolBar>
        <Grip $size={6} />
        <Tools items={mainA} />
        <Combo $w={82}>
          <ComboBox aria-label="Skala"><option>1:29124</option></ComboBox>
          <ComboArrow><Caret /></ComboArrow>
        </Combo>
        <Tools items={mainB} />
        <Combo $w={120}>
          <ComboBox aria-label="Styl"><option></option></ComboBox>
          <ComboArrow><Caret /></ComboArrow>
        </Combo>
        <Tools items={mainC} />
      </ToolBar>
      <Body>
        <SideBar>
          <Grip $flat $size={8} />
          <Tools flat items={side} />
        </SideBar>
        <Mdi>
          <MapWindow>
            <WindowTitle>
              <Icon name="globe" />
              <WindowName>Mapy i schematy</WindowName>
              <FrameButton type="button" aria-label="Minimalizuj okno"><WinGlyph kind="min" /></FrameButton>
              <FrameButton type="button" aria-label="Maksymalizuj okno"><WinGlyph kind="max" /></FrameButton>
              <FrameButton type="button" aria-label="Zamknij okno" $close><WinGlyph kind="close" /></FrameButton>
            </WindowTitle>
            <TabRow>
              <DocTab type="button"><Icon name="map" />Mapa Szczawnica</DocTab>
              <DocTab type="button" $on><Icon name="houses" />Budynek ul.Ojcowska 25</DocTab>
              <Spacer />
              <BareButton type="button" aria-label="Lista kart"><Caret /></BareButton>
              <BareButton type="button" aria-label="Zamknij kartę">
                <svg width="8" height="8"><path d="M0 0l8 8M8 0L0 8" stroke="#000" strokeWidth="1.600" /></svg>
              </BareButton>
            </TabRow>
            <Workspace>
              <TopRuler />
              <SideRuler />
              <Canvas>
                <FloorPlan />
                <PassportButton type="button"><Icon name="pencil" />Paszport</PassportButton>
                <Tip>
                  <TipTitle>Lokalizacja</TipTitle>
                  <dt>Nazwa:</dt><dd>Test</dd>
                  <dt>Nr:</dt><dd>PSS009</dd>
                </Tip>
              </Canvas>
            </Workspace>
            <StatusBar><span>X: 6347,76</span><span>Y: 4808,98 [m]</span><i /></StatusBar>
          </MapWindow>
        </Mdi>
        <Dock>
          <Head title="Własności" />
          <Empty>Brak wybranego elementu</Empty>
          <DockTabs>
            <DockTab type="button" $on><Icon name="form" />W...</DockTab>
            <DockTab type="button"><Icon name="layers" />Lis...</DockTab>
            <DockTab type="button"><Icon name="info" />Le...</DockTab>
            <DockTab type="button"><Icon name="sheet" />Lis...</DockTab>
          </DockTabs>
          <Head title="Skany na schemacie" />
          <DockTools>
            <Grip $size={6} />
            <Tools items={[{ i: "mapAdd", n: "Dodaj skan", split: true }, { i: "mapDel", n: "Usuń skan" }, { i: "mapGo", n: "Pokaż skan" }, "|", { i: "refresh", n: "Odśwież skany" }]} />
          </DockTools>
          <ScanList>
            <li>
              <Icon name="map" />
              <label><Check type="checkbox" defaultChecked />wezel</label>
            </li>
          </ScanList>
          <DockTabs $last>
            <DockTab type="button" $on><Icon name="picture" />Skany na sc...</DockTab>
          </DockTabs>
        </Dock>
      </Body>
      <BottomBar>
        <Grip $size={6} />
        <Tools items={bottomA} />
        <ReportButton type="button"><Icon name="report" />Raporty wyróżniające<Caret /></ReportButton>
        <Sep />
        <Tools items={[{ i: "blank", n: "Pusty" }]} />
      </BottomBar>
    </Shell>
  );
}
